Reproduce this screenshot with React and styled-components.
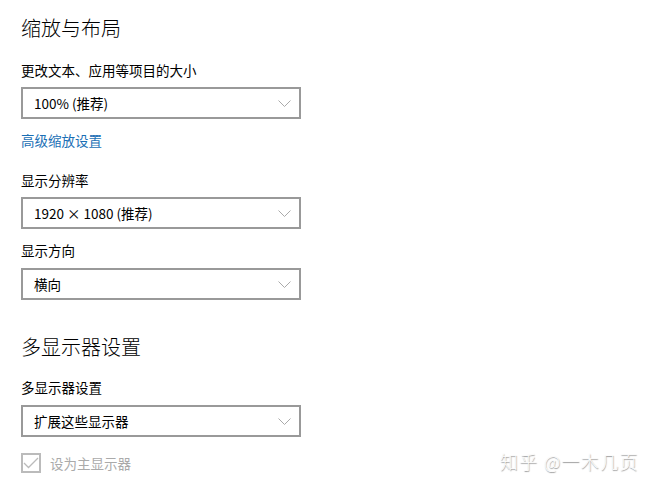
import styled, { createGlobalStyle } from 'styled-components';

const GlobalStyle = createGlobalStyle`
  html, body {
    margin: 0;
    padding: 0;
    background: #fff;
  }
  body {
    font-family: "Noto Sans CJK SC", "Noto Sans", sans-serif;
    color: #000;
  }
`;

const Page = styled.main`
  position: relative;
  width: 659px;
  height: 489px;
  box-sizing: border-box;
  padding: 14px 0 0 21px;
  overflow: hidden;
`;

const Heading = styled.h2`
  margin: ${props => props.top || 0}px 0 0;
  font-size: 20px;
  font-weight: 300;
  line-height: 28px;
`;

const Label = styled.div`
  margin-top: ${props => props.top}px;
  font-size: 13.5px;
  line-height: 20px;
`;

const Link = styled.a`
  display: block;
  margin-top: ${props => props.top}px;
  font-size: 13.5px;
  line-height: 20px;
  color: #1a6fb5;
  text-decoration: none;
`;

const Select = styled.div`
  margin-top: ${props => props.top}px;
  width: 280px;
  height: 32px;
  box-sizing: border-box;
  border: 2px solid #999;
  display: flex;
  align-items: center;
  justify-content: space-between;
  padding: 0 8px 0 11px;
  font-size: 13.5px;
`;

const Chevron = styled.svg`
  width: 13px;
  height: 7px;
`;

const CheckRow = styled.label`
  margin-top: ${props => props.top}px;
  display: flex;
  align-items: center;
  gap: 9px;
  color: #aaa;
  font-size: 13.5px;
`;

const Box = styled.span`
  width: 20px;
  height: 20px;
  box-sizing: border-box;
  border: 2px solid #bbb;
  display: flex;
  align-items: center;
  justify-content: center;
`;

const Watermark = styled.div`
  position: absolute;
  left: 500px;
  top: 448px;
  font-size: 18px;
  font-weight: 300;
  color: #fcfcfc;
  text-shadow: 0.5px 0.5px 1px #999;
  letter-spacing: 1.3px;
`;

const Dropdown = ({ value, top }) => (
  <Select top={top}>
    <span>{value}</span>
    <Chevron viewBox="0 0 13 7">
      <polyline points="0.5,0.5 6.5,6.5 12.5,0.5" fill="none" stroke="#aaa" strokeWidth="1" />
    </Chevron>
  </Select>
);

const App = () => (
  <>
    <GlobalStyle />
    <Page>
      <Heading>缩放与布局</Heading>
      <Label top={18}>更改文本、应用等项目的大小</Label>
      <Dropdown top={7} value="100% (推荐)" />
      <Link top={11} href="#">高级缩放设置</Link>
      <Label top={20}>显示分辨率</Label>
      <Dropdown top={7} value="1920 × 1080 (推荐)" />
      <Label top={11}>显示方向</Label>
      <Dropdown top={8} value="横向" />
      <Heading top={33}>多显示器设置</Heading>
      <Label top={16}>多显示器设置</Label>
      <Dropdown top={8} value="扩展这些显示器" />
      <CheckRow top={16}>
        <Box>
          <svg width="16" height="12" viewBox="0 0 16 12">
            <polyline points="1,6 5.5,10.5 15,1" fill="none" stroke="#bbb" strokeWidth="1.3" />
          </svg>
        </Box>
        设为主显示器
      </CheckRow>
      <Watermark>知乎 @一木几页</Watermark>
    </Page>
  </>
);

export default App;
